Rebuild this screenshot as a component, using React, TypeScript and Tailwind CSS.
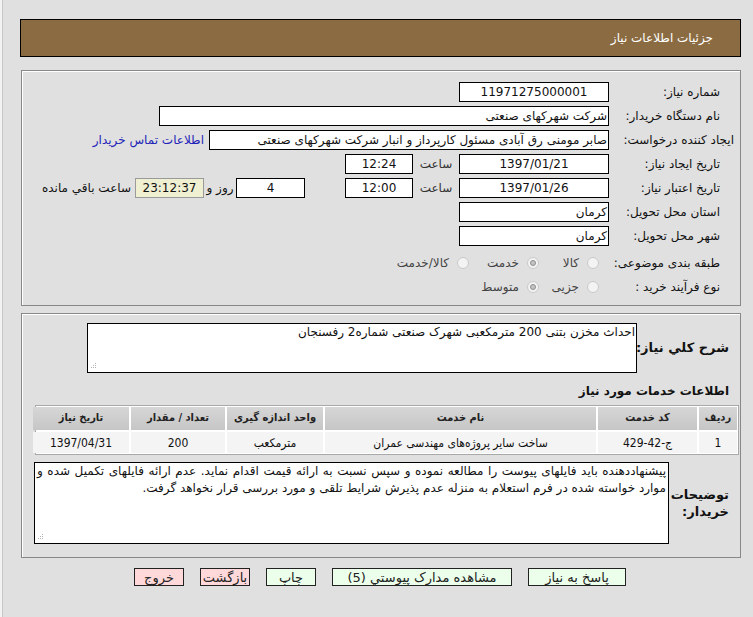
import React from 'react'

const font = "font-['DejaVu_Sans',sans-serif]"
const narrow = "font-['DejaVu_Sans_Condensed','DejaVu_Sans',sans-serif]"

function Label({ text, wide }: { text: string; wide?: boolean }) {
  return (
    <div className={`w-[131px] shrink-0 whitespace-nowrap text-right ${wide ? 'pr-[6px]' : 'pr-[20px]'}`}>
      {text}
    </div>
  )
}

function Box({ w, value, center, tint }: { w: string; value: string; center?: boolean; tint?: boolean }) {
  return (
    <div
      className={`${w} h-[20px] shrink-0 flex items-center overflow-hidden whitespace-nowrap ${
        center ? 'justify-center' : 'justify-start pr-[1px]'
      } ${tint ? 'bg-[#efefd2] border border-[#9a9a9a]' : 'bg-white border border-black'}`}
    >
      {value}
    </div>
  )
}

function Radio({ label, checked, w }: { label: string; checked?: boolean; w: string }) {
  return (
    <div className={`${w} flex items-center gap-[8px] shrink-0`}>
      <span className="w-[12px] h-[12px] rounded-full border border-[#c9c9c9] bg-[#f3f3f3] flex items-center justify-center">
        {checked && <span className="w-[6px] h-[6px] rounded-full border border-[#8d8d8d] bg-[#c4c4c4]" />}
      </span>
      <span className="text-[#444]">{label}</span>
    </div>
  )
}

function Grip() {
  return (
    <svg width="8" height="8" className="absolute left-[2px] bottom-[2px]">
      <rect x="5" y="1" width="1" height="1" fill="#b5b5b5" />
      <rect x="3" y="3" width="1" height="1" fill="#b5b5b5" />
      <rect x="5" y="3" width="1" height="1" fill="#b5b5b5" />
      <rect x="1" y="5" width="1" height="1" fill="#b5b5b5" />
      <rect x="3" y="5" width="1" height="1" fill="#b5b5b5" />
      <rect x="5" y="5" width="1" height="1" fill="#b5b5b5" />
    </svg>
  )
}

const cols = [
  { title: 'ردیف', w: 'w-[38px]' },
  { title: 'کد خدمت', w: 'w-[99px]' },
  { title: 'نام خدمت', w: 'w-[271px]' },
  { title: 'واحد اندازه گیری', w: 'w-[96px]' },
  { title: 'تعداد / مقدار', w: 'w-[94px]' },
  { title: 'تاریخ نیاز', w: 'w-[96px]' },
]
const row = ['1', 'ج-42-429', 'ساخت سایر پروژه‌های مهندسی عمران', 'مترمکعب', '200', '1397/04/31']

const buttons = [
  { text: 'پاسخ به نیاز', w: 'w-[98px]', bg: 'bg-[#ebffeb]' },
  { text: 'مشاهده مدارک پیوستي (5)', w: 'w-[180px]', bg: 'bg-[#ebffeb]' },
  { text: 'چاپ', w: 'w-[50px]', bg: 'bg-[#ebffeb]' },
  { text: 'بازگشت', w: 'w-[50px]', bg: 'bg-[#ffd9d9]' },
  { text: 'خروج', w: 'w-[50px]', bg: 'bg-[#ffd9d9]' },
]

export default function App() {
  return (
    <div
      dir="rtl"
      className={`${font} w-[753px] h-[617px] overflow-hidden bg-[#e0e0e0] text-[12px] text-[#111] shadow-[inset_2px_0_0_#f2f2f2,inset_3px_0_0_#c6c6c6]`}
    >
      <div className="pt-[19px]">
        <div className="ml-[20px] mr-[12px] h-[38px] border border-black bg-[#8b6c42] flex items-center pr-[27px] text-white">
          جزئیات اطلاعات نیاز
        </div>
      </div>

      {/* main info panel */}
      <div className="mt-[13px] ml-[21px] mr-[12px] h-[236px] border border-[#888] shadow-[inset_1px_1px_0_#fff] pt-[11px]">
        <div className="flex items-center h-[20px] mb-[4px]">
          <Label text="شماره نیاز:" />
          <Box w="w-[150px]" value="11971275000001" center />
        </div>
        <div className="flex items-center h-[20px] mb-[4px]">
          <Label text="نام دستگاه خریدار:" />
          <Box w="w-[450px]" value="شرکت شهرکهای صنعتی" />
        </div>
        <div className="flex items-center h-[20px] mb-[4px]">
          <Label text="ایجاد کننده درخواست:" wide />
          <Box w="w-[400px]" value="صابر مومنی رق آبادی مسئول کارپرداز و انبار شرکت شهرکهای صنعتی" />
          <a className="mr-[5px] whitespace-nowrap text-[#2323b8]">اطلاعات تماس خریدار</a>
        </div>
        <div className="flex items-center h-[20px] mb-[4px]">
          <Label text="تاریخ ایجاد نیاز:" />
          <Box w="w-[150px]" value="1397/01/21" center />
          <div className="w-[46px] text-center text-[#333]">ساعت</div>
          <Box w="w-[68px]" value="12:24" center />
        </div>
        <div className="flex items-center h-[20px] mb-[4px]">
          <Label text="تاریخ اعتبار نیاز:" />
          <Box w="w-[150px]" value="1397/01/26" center />
          <div className="w-[46px] text-center text-[#333]">ساعت</div>
          <Box w="w-[68px]" value="12:00" center />
          <div className="w-[40px]" />
          <Box w="w-[69px]" value="4" center />
          <div className="w-[32px] text-center">روز و</div>
          <Box w="w-[69px]" value="23:12:37" center tint />
          <div className="mr-[4px] whitespace-nowrap">ساعت باقي مانده</div>
        </div>
        <div className="flex items-center h-[20px] mb-[4px]">
          <Label text="استان محل تحویل:" />
          <Box w="w-[150px]" value="کرمان" />
        </div>
        <div className="flex items-center h-[20px] mb-[7px]">
          <Label text="شهر محل تحویل:" />
          <Box w="w-[150px]" value="کرمان" />
        </div>
        <div className="flex items-center h-[20px] mb-[4px]">
          <Label text="طبقه بندی موضوعی:" />
          <div className="flex items-center mr-[10px]">
            <Radio label="کالا" w="w-[60px]" />
            <Radio label="خدمت" w="w-[70px]" checked />
            <Radio label="کالا/خدمت" w="w-[90px]" />
          </div>
        </div>
        <div className="flex items-center h-[20px]">
          <Label text="نوع فرآیند خرید :" />
          <div className="flex items-center mr-[10px]">
            <Radio label="جزیی" w="w-[60px]" />
            <Radio label="متوسط" w="w-[80px]" checked />
          </div>
        </div>
      </div>

      {/* description panel */}
      <div className="mt-[7px] ml-[21px] mr-[12px] h-[245px] border border-[#888] shadow-[inset_1px_1px_0_#fff] pt-[9px]">
        <div className="flex items-center">
          <div className="w-[103px] shrink-0 pr-[11px] text-[13px] font-bold whitespace-nowrap">شرح کلي نیاز:</div>
          <div className="relative w-[550px] h-[50px] bg-white border border-black pr-[1px] text-[12px] leading-[17px]">
            احداث مخزن بتنی 200 مترمکعبی شهرک صنعتی شماره2 رفسنجان
            <Grip />
          </div>
        </div>

        <div className="mt-[9px] pr-[11px] text-[12px] font-bold">اطلاعات خدمات مورد نیاز</div>

        <div className="mt-[5px] mr-[1px] w-[704px] border border-[#a8a8a8] bg-white p-[1px]">
          <div className="flex gap-[2px]">
            {cols.map((c) => (
              <div
                key={c.title}
                className={`${c.w} ${narrow} shrink-0 h-[23px] flex items-center justify-center bg-gradient-to-b from-[#d6d6d6] to-[#c6c6c6] text-[11px] font-bold text-[#222] whitespace-nowrap`}
              >
                {c.title}
              </div>
            ))}
          </div>
          <div className="flex gap-[2px] mt-[2px]">
            {row.map((v, i) => (
              <div
                key={i}
                className={`${cols[i].w} ${narrow} shrink-0 h-[21px] flex items-center justify-center bg-[#f4f4f4] text-[12px] whitespace-nowrap`}
              >
                {v}
              </div>
            ))}
          </div>
        </div>

        <div className="mt-[7px] flex items-center">
          <div className="w-[71px] shrink-0 pr-[11px] text-[13px] font-bold leading-[17px]">
            توضیحات
            <br />
            خریدار:
          </div>
          <div className="relative w-[635px] h-[82px] bg-white border border-black px-[2px] text-[12px] leading-[17px] text-justify [text-align-last:right]">
            پیشنهاددهنده باید فایلهای پیوست را مطالعه نموده و سپس نسبت به ارائه قیمت اقدام نماید. عدم ارائه فایلهای تکمیل شده و موارد خواسته شده در فرم استعلام به منزله عدم پذیرش شرایط تلقی و مورد بررسی قرار نخواهد گرفت.
            <Grip />
          </div>
        </div>
      </div>

      <div className="mt-[10px] mr-[127px] flex gap-[16px]">
        {buttons.map((b) => (
          <button
            key={b.text}
            className={`${b.w} ${b.bg} h-[18px] shrink-0 border border-[#222] text-[13px] leading-none text-[#222] whitespace-nowrap flex items-center justify-center`}
          >
            {b.text}
          </button>
        ))}
      </div>
    </div>
  )
}
